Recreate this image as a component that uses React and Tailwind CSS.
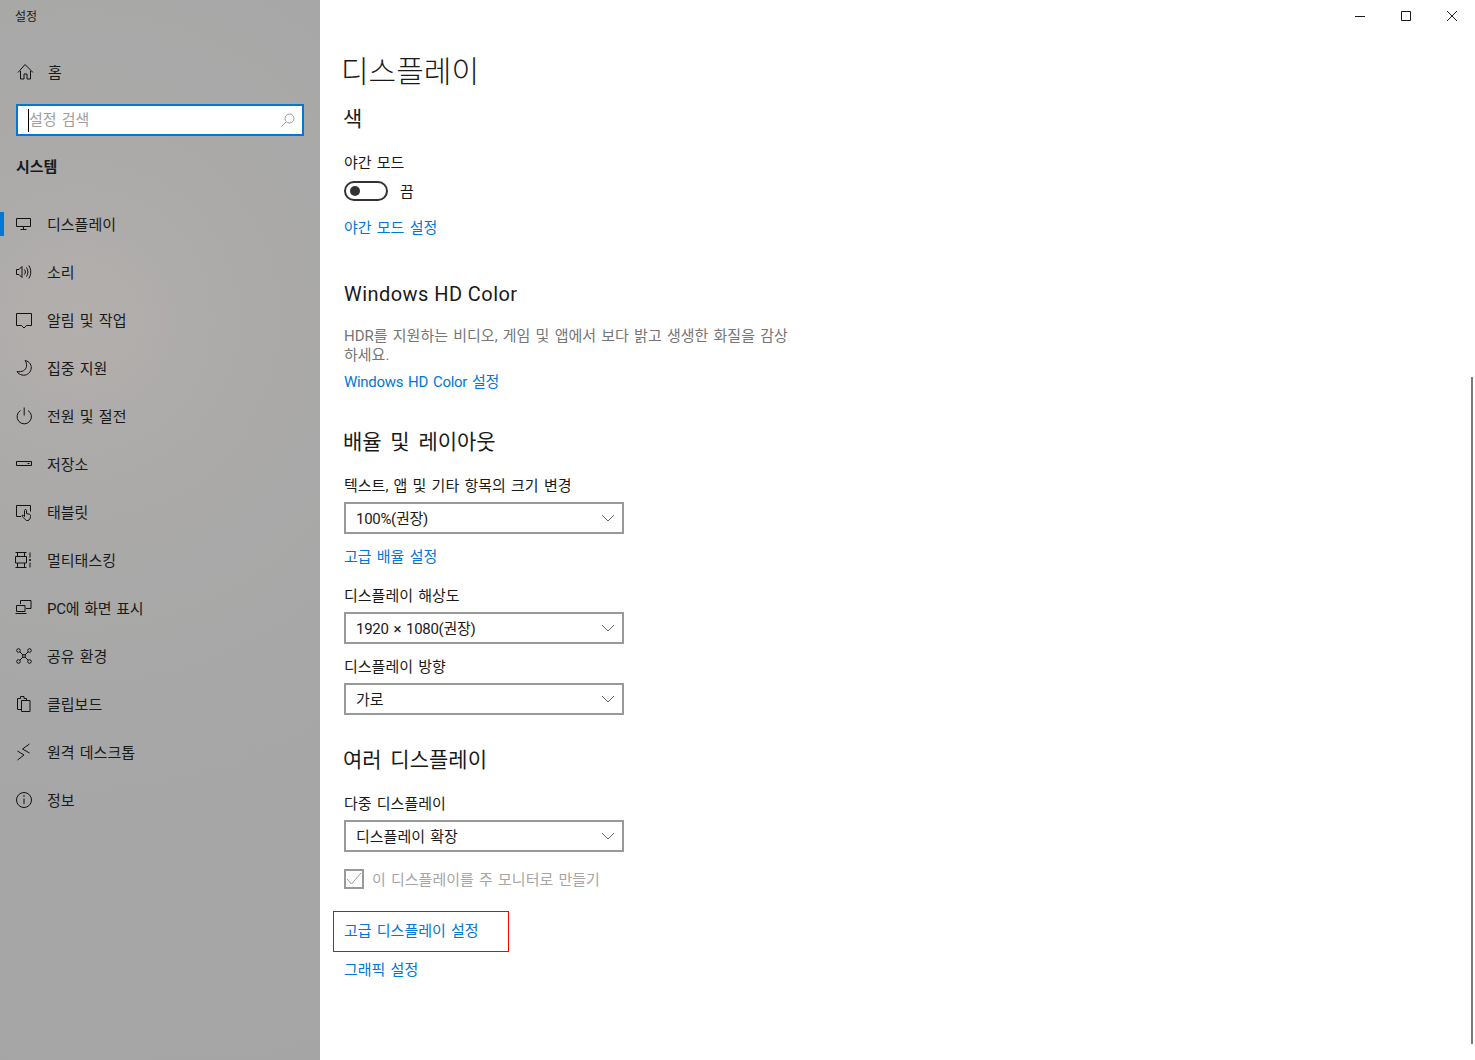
import React from "react";

const Icon = ({ children, className = "" }) => (
  <svg
    width="18"
    height="18"
    viewBox="0 0 18 18"
    fill="none"
    stroke="currentColor"
    strokeWidth="1"
    className={`shrink-0 text-[#111111] ${className}`}
  >
    {children}
  </svg>
);

const navItems = [
  {
    label: "디스플레이",
    active: true,
    icon: <path d="M1.5 3.5h14v8h-14zM8.5 11.5v2.500M5.5 14.500h6" />,
  },
  {
    label: "소리",
    icon: (
      <>
        <path d="M1.5 6.5h2.5l3-3v11l-3-3H1.5z" />
        <path d="M9.5 6.5c1 1.5 1 3.5 0 5M11.5 4.5c1.8 2.7 1.8 6.3 0 9M13.8 2.5c2.6 4 2.6 9 0 13" />
      </>
    ),
  },
  {
    label: "알림 및 작업",
    icon: <path d="M1.5 2.5h15v12h-5l-2.5 2.5-2.5-2.5h-5z" />,
  },
  {
    label: "집중 지원",
    icon: <path d="M10 1.5c5 1 7 5 6 9-1 4-5 6.500-9 5.500-2-.5-4-1.500-5-3.500 5 1 9-1.500 9.500-5 .3-2.500-.2-4.500-1.500-6z" />,
  },
  {
    label: "전원 및 절전",
    icon: <path d="M5.500 3.500a7.200 7.200 0 1 0 7.500 0M9.200 .5v8" />,
  },
  {
    label: "저장소",
    icon: <path d="M1.500 6.500h15v4h-15zM12.500 8.500h2" />,
  },
  {
    label: "태블릿",
    icon: (
      <>
        <path d="M6 13.500H1.500v-11h14v6" />
        <path d="M9.500 15.500c-1.500-1-3-2.500-2.500-3 .6-.6 1.500 0 2.500 1v-6c0-1.300 2-1.300 2 0v3l3 .8c1 .3 1 1 1 2.200 0 2-1 3.500-2.500 4h-1.500c-.7 0-1.300-1.300-2-2z" />
      </>
    ),
  },
  {
    label: "멀티태스킹",
    icon: (
      <>
        <path d="M.5 1.500h11M.5 16.500h11M2.500 1.500v4M9.500 1.500v4M2.500 12v4.500M9.500 12v4.500M.5 5.500h11v6.500h-11z" />
        <path d="M15 1.500v5M15 11.500v5" />
        <circle cx="15" cy="9" r="1.100" fill="currentColor" stroke="none" />
      </>
    ),
  },
  {
    label: "PC에 화면 표시",
    tight: true,
    icon: <path d="M5.500 5V1.500h10.500v8H11M1.500 6.500h8.500v6h-8.500zM.5 14.500h11" />,
  },
  {
    label: "공유 환경",
    icon: (
      <>
        <circle cx="3.500" cy="3.500" r="1.800" />
        <circle cx="14.500" cy="3.500" r="1.800" />
        <circle cx="3.500" cy="14.500" r="1.800" />
        <circle cx="14.500" cy="14.500" r="1.800" />
        <circle cx="9" cy="9" r="1.400" />
        <path d="M5 5l3 3M13 5l-3 3M5 13l3-3M13 13l-3-3" />
      </>
    ),
  },
  {
    label: "클립보드",
    icon: <path d="M2.500 14.500V3.500h3V1.500h3.500v2h2.500v2M6.500 5.500h8.500v11H6.500zM2.500 14.500h4" />,
  },
  {
    label: "원격 데스크톱",
    icon: <path d="M2.500 8l6.500 4-6.500 5M14.500 1l-7 5 7 4" />,
  },
  {
    label: "정보",
    icon: (
      <>
        <circle cx="9" cy="9" r="7.500" />
        <path d="M9 7.500v5.500" />
        <circle cx="9" cy="5" r=".8" fill="currentColor" stroke="none" />
      </>
    ),
  },
];

const Label = ({ children, className = "" }) => (
  <div className={`h-5 text-[15px] leading-[22px] [word-spacing:1.5px] text-[#1a1a1a] ${className}`}>{children}</div>
);

const LinkText = ({ children, className = "" }) => (
  <div className={`h-5 text-[15px] leading-[22px] [word-spacing:1.5px] text-[#0078d7] ${className}`}>{children}</div>
);

const Heading = ({ children, className = "" }) => (
  <h2 className={`-ml-px h-7 text-[21px] font-normal leading-[31px] [word-spacing:3.5px] text-[#1a1a1a] ${className}`}>{children}</h2>
);

const Dropdown = ({ value, tight = false }) => (
  <div className="mt-[7px] flex h-8 w-[280px] items-center justify-between border-2 border-[#999999] pl-[10px] pr-[7px] text-[15px] text-[#1a1a1a]">
    <span className={`pt-[2px] [word-spacing:1.5px] ${tight ? "tracking-[-0.3px]" : ""}`}>{value}</span>
    <svg width="14" height="8" viewBox="0 0 14 8" fill="none" stroke="#666666" strokeWidth="1">
      <path d="M1 1l6 6 6-6" />
    </svg>
  </div>
);

export default function App() {
  return (
    <div className="flex h-[1060px] w-[1475px] overflow-hidden bg-white font-['Roboto','Noto_Sans_CJK_KR',sans-serif]">
      {/* Sidebar */}
      <aside className="h-full w-[320px] shrink-0 bg-[radial-gradient(circle_at_80px_320px,#b3afad_0%,#abaaa9_22%,#a7a7a7_50%,#a5a5a5_100%)]">
        <div className="h-8 pl-[15px] pt-[9px] text-xs leading-4 text-[#1a1a1a]">설정</div>

        <div className="mt-4 flex h-12 items-center pl-[17px]">
          <Icon>
            <path d="M1 9.500L8 1.500l8 8M3.500 8v8h3.500v-5h3v5h3.500V8" />
          </Icon>
          <span className="ml-[13px] pt-[2px] text-[15px] text-[#1a1a1a]">홈</span>
        </div>

        <div className="mx-4 mt-2 flex h-8 items-center justify-between border-2 border-[#0078d7] bg-white pl-[10px] pr-[7px]">
          <div className="flex items-center">
            <span className="h-[23px] w-px bg-black" />
            <span className="text-[15px] text-[#a0a0a0] [word-spacing:1.5px]">설정 검색</span>
          </div>
          <svg width="14" height="14" viewBox="0 0 14 14" fill="none" stroke="#9a9a9a" strokeWidth="1">
            <circle cx="8.500" cy="5.500" r="4.500" />
            <path d="M5.200 8.800L.7 13.300" />
          </svg>
        </div>

        <div className="mt-5 h-5 pl-4 text-[15px] font-bold leading-[22px] text-[#1a1a1a]">시스템</div>

        <nav className="mt-6">
          {navItems.map((item) => (
            <div key={item.label} className="relative flex h-12 items-center pl-[15px]">
              {item.active && <span className="absolute left-0 top-3 h-6 w-1 bg-[#0078d7]" />}
              <Icon>{item.icon}</Icon>
              <span className={`ml-[14px] pt-[2px] text-[15px] text-[#1a1a1a] [word-spacing:1.5px] ${item.tight ? "tracking-[-0.25px]" : ""}`}>
                {item.label}
              </span>
            </div>
          ))}
        </nav>
      </aside>

      {/* Content */}
      <main className="relative flex-1 pl-6 pt-[48px]">
        <h1 className="-ml-[3px] h-11 text-[30px] font-light leading-[48px] [word-spacing:3px] text-[#1a1a1a]">디스플레이</h1>

        <Heading className="mt-3">색</Heading>
        <Label className="mt-5">야간 모드</Label>
        <div className="mt-[9px] flex h-5 items-center">
          <div className="flex h-[20px] w-11 items-center rounded-full border-2 border-[#333333] pl-[4px]">
            <span className="h-[10px] w-[10px] rounded-full bg-[#333333]" />
          </div>
          <span className="ml-3 pt-[2px] text-[15px] text-[#1a1a1a]">끔</span>
        </div>
        <LinkText className="mt-4">야간 모드 설정</LinkText>

        <h2 className="mt-[43px] h-7 text-[20px] font-normal leading-7 tracking-[0.44px] text-[#1a1a1a]">Windows HD Color</h2>
        <p className="mt-[19px] w-[450px] text-[15px] leading-[19px] [word-spacing:1.5px] text-[#767676]">
          HDR를 지원하는 비디오, 게임 및 앱에서 보다 밝고 생생한 화질을 감상하세요.
        </p>
        <LinkText className="mt-[6px] tracking-[-0.3px]">Windows HD Color 설정</LinkText>

        <Heading className="mt-9">배율 및 레이아웃</Heading>
        <Label className="mt-5">텍스트, 앱 및 기타 항목의 크기 변경</Label>
        <Dropdown value="100%(권장)" tight />
        <LinkText className="mt-3">고급 배율 설정</LinkText>

        <Label className="mt-[19px]">디스플레이 해상도</Label>
        <Dropdown value="1920 × 1080(권장)" tight />
        <Label className="mt-3">디스플레이 방향</Label>
        <Dropdown value="가로" />

        <Heading className="mt-[30px]">여러 디스플레이</Heading>
        <Label className="mt-5">다중 디스플레이</Label>
        <Dropdown value="디스플레이 확장" />

        <div className="mt-[17px] flex h-5 items-center">
          <div className="flex h-5 w-5 items-center justify-center border-2 border-[#999999]">
            <svg width="16" height="14" viewBox="0 0 16 14" fill="none" stroke="#999999" strokeWidth="1">
              <path d="M1 7l4.500 5L15 1" />
            </svg>
          </div>
          <span className="ml-2 pt-[2px] text-[15px] text-[#a6a6a6] [word-spacing:1.5px]">이 디스플레이를 주 모니터로 만들기</span>
        </div>

        <div className="-ml-[11px] mt-[22px] h-[41px] w-[176px] border border-[#ff0000] pl-[10px] pt-[8px]">
          <LinkText>고급 디스플레이 설정</LinkText>
        </div>
        <LinkText className="mt-[7px]">그래픽 설정</LinkText>

        {/* Window buttons */}
        <div className="absolute right-0 top-0 flex h-8 items-center text-[#1a1a1a]">
          {[
            <path key="min" d="M0 5.500h10" />,
            <path key="max" d="M.5 .5h9v9h-9z" />,
            <path key="close" d="M0 0l10 10M10 0L0 10" />,
          ].map((glyph, i) => (
            <div key={i} className="flex h-8 w-[46px] items-center justify-center">
              <svg width="10" height="10" viewBox="0 0 10 10" fill="none" stroke="currentColor" strokeWidth="1">
                {glyph}
              </svg>
            </div>
          ))}
        </div>

        {/* Scrollbar thumb */}
        <div className="absolute right-[2px] top-[377px] h-[667px] w-[2px] bg-[#7a7a7a]" />
      </main>
    </div>
  );
}
